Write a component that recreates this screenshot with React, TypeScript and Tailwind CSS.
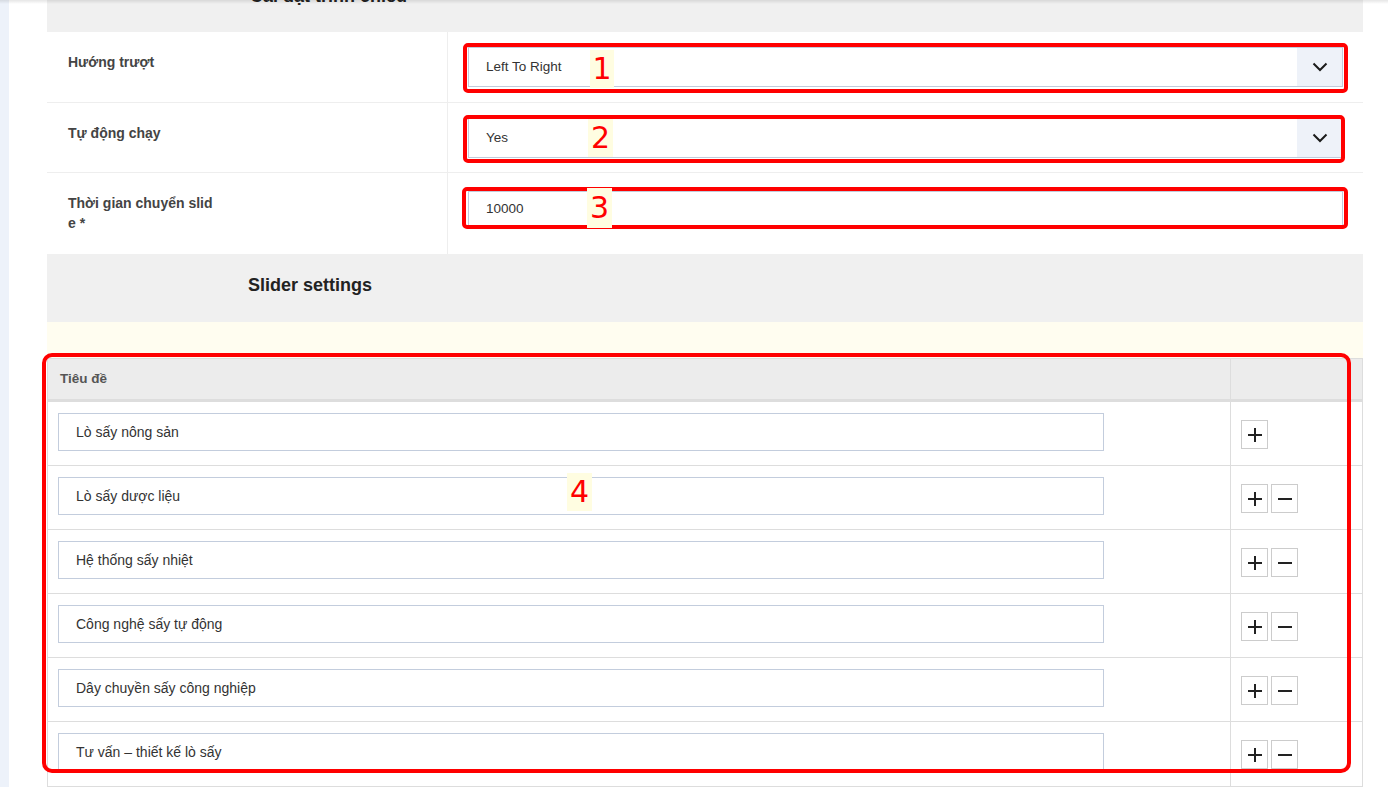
import React from "react";

const font = "font-['Liberation_Sans',Arial,sans-serif]";

const slides = [
  { title: "Lò sấy nông sản", first: true },
  { title: "Lò sấy dược liệu" },
  { title: "Hệ thống sấy nhiệt" },
  { title: "Công nghệ sấy tự động" },
  { title: "Dây chuyền sấy công nghiệp" },
  { title: "Tư vấn – thiết kế lò sấy" },
];

function Chevron() {
  return (
    <svg width="16" height="10" viewBox="0 0 16 10" fill="none">
      <polyline points="1.5,1.5 8,8 14.5,1.5" stroke="#1b1b1b" strokeWidth="2" />
    </svg>
  );
}

function SelectBox({ value }: { value: string }) {
  return (
    <div className="flex h-[40px] w-full items-stretch border border-[#c1cbdb] bg-white">
      <div className="flex flex-1 items-center pl-[17px] text-[13.5px] text-[#333]">{value}</div>
      <div className="flex w-[45px] items-center justify-center bg-[#eef2f9]">
        <Chevron />
      </div>
    </div>
  );
}

function PlusIcon() {
  return (
    <svg width="14" height="14" viewBox="0 0 14 14">
      <rect x="0" y="6" width="14" height="2" fill="#222" />
      <rect x="6" y="0" width="2" height="14" fill="#222" />
    </svg>
  );
}

function MinusIcon() {
  return (
    <svg width="14" height="14" viewBox="0 0 14 14">
      <rect x="0" y="6" width="14" height="2" fill="#222" />
    </svg>
  );
}

function Badge({ n, className }: { n: string; className: string }) {
  return (
    <div
      className={`absolute flex items-center justify-center bg-[#fffde1] text-[30px] leading-none text-[#ff0000] font-['DejaVu_Sans',sans-serif] ${className}`}
    >
      {n}
    </div>
  );
}

export default function App() {
  return (
    <div className={`relative min-h-[789px] overflow-hidden bg-white ${font}`}>
      <div className="flex">
        <div className="w-[9px] shrink-0 bg-[#edf2fa]" />
        <div className="ml-[38px] w-[1316px] shrink-0">
          {/* section header, scrolled past */}
          <div className="h-[32px] overflow-hidden bg-[#f0f0f0]">
            <div className="-mt-[14px] pl-[203px] text-[18px] font-bold leading-[20px] text-[#222]">
              Cài đặt trình chiếu
            </div>
          </div>

          {/* form rows */}
          <div className="grid grid-cols-[401px_1fr]">
            <div className="border-b border-r border-[#eeeeee] px-[21px] pt-[20px] text-[14px] font-bold leading-5 text-[#444]">
              Hướng trượt
            </div>
            <div className="border-b border-[#eeeeee] px-[20px] py-[15px]">
              <SelectBox value="Left To Right" />
            </div>
            <div className="border-b border-r border-[#eeeeee] px-[21px] pt-[20px] text-[14px] font-bold leading-5 text-[#444]">
              Tự động chạy
            </div>
            <div className="border-b border-[#eeeeee] px-[20px] pt-[15px] pb-[14px]">
              <SelectBox value="Yes" />
            </div>
            <div className="border-r border-[#eeeeee] px-[21px] pt-[20px] pb-[21px] text-[14px] font-bold leading-5 text-[#444]">
              <div className="w-[150px] break-all">Thời gian chuyển slide *</div>
            </div>
            <div className="px-[20px] pt-[18px]">
              <div className="flex h-[37px] items-center border border-[#c1cbdb] pl-[17px] text-[13.5px] text-[#333]">
                10000
              </div>
            </div>
          </div>

          {/* slider settings */}
          <div className="h-[68px] bg-[#f0f0f0] pl-[201px] pt-[20px] text-[18px] font-bold leading-[22px] text-[#222]">
            Slider settings
          </div>
          <div className="bg-[#fffdf0] pt-[36px]">
            <div className="border border-[#dddddd] bg-white">
              <div className="grid grid-cols-[1182px_1fr] border-b-[3px] border-[#dddddd] bg-[#ececec]">
                <div className="flex h-[40px] items-center pl-[12px] text-[13.5px] font-bold text-[#555]">
                  Tiêu đề
                </div>
                <div className="border-l border-[#dddddd]" />
              </div>
              {slides.map((s, i) => (
                <div
                  key={i}
                  className="grid h-[64px] grid-cols-[1182px_1fr] border-b border-[#dddddd] last:border-b-0"
                >
                  <div className="pl-[10px] pt-[11px]">
                    <div className="flex h-[38px] w-[1046px] items-center border border-[#c3cddd] pl-[17px] text-[14px] text-[#333]">
                      {s.title}
                    </div>
                  </div>
                  <div className="flex items-start gap-[3px] border-l border-[#dddddd] pl-[10px] pt-[18px]">
                    <button className="flex h-[29px] w-[27px] items-center justify-center border border-[#cccccc] bg-white">
                      <PlusIcon />
                    </button>
                    {!s.first && (
                      <button className="flex h-[29px] w-[27px] items-center justify-center border border-[#cccccc] bg-white">
                        <MinusIcon />
                      </button>
                    )}
                  </div>
                </div>
              ))}
            </div>
          </div>
        </div>
      </div>

      {/* top shadow */}
      <div className="pointer-events-none absolute left-0 right-0 top-0 h-[4px] bg-gradient-to-b from-black/10 to-transparent" />

      {/* annotation boxes */}
      <div className="absolute left-[463px] top-[43px] h-[50px] w-[885px] rounded-[5px] border-[4px] border-[#ff0000]" />
      <div className="absolute left-[463px] top-[115px] h-[48px] w-[882px] rounded-[5px] border-[4px] border-[#ff0000]" />
      <div className="absolute left-[462px] top-[187px] h-[42px] w-[886px] rounded-[5px] border-[4px] border-[#ff0000]" />
      <div className="absolute left-[42px] top-[353px] h-[420px] w-[1309px] rounded-[10px] border-[4px] border-[#ff0000]" />

      <Badge n="1" className="left-[590px] top-[50px] h-[38px] w-[24px]" />
      <Badge n="2" className="left-[588px] top-[119px] h-[38px] w-[25px]" />
      <Badge n="3" className="left-[587px] top-[188px] h-[40px] w-[25px]" />
      <Badge n="4" className="left-[567px] top-[473px] h-[38px] w-[25px]" />
    </div>
  );
}
